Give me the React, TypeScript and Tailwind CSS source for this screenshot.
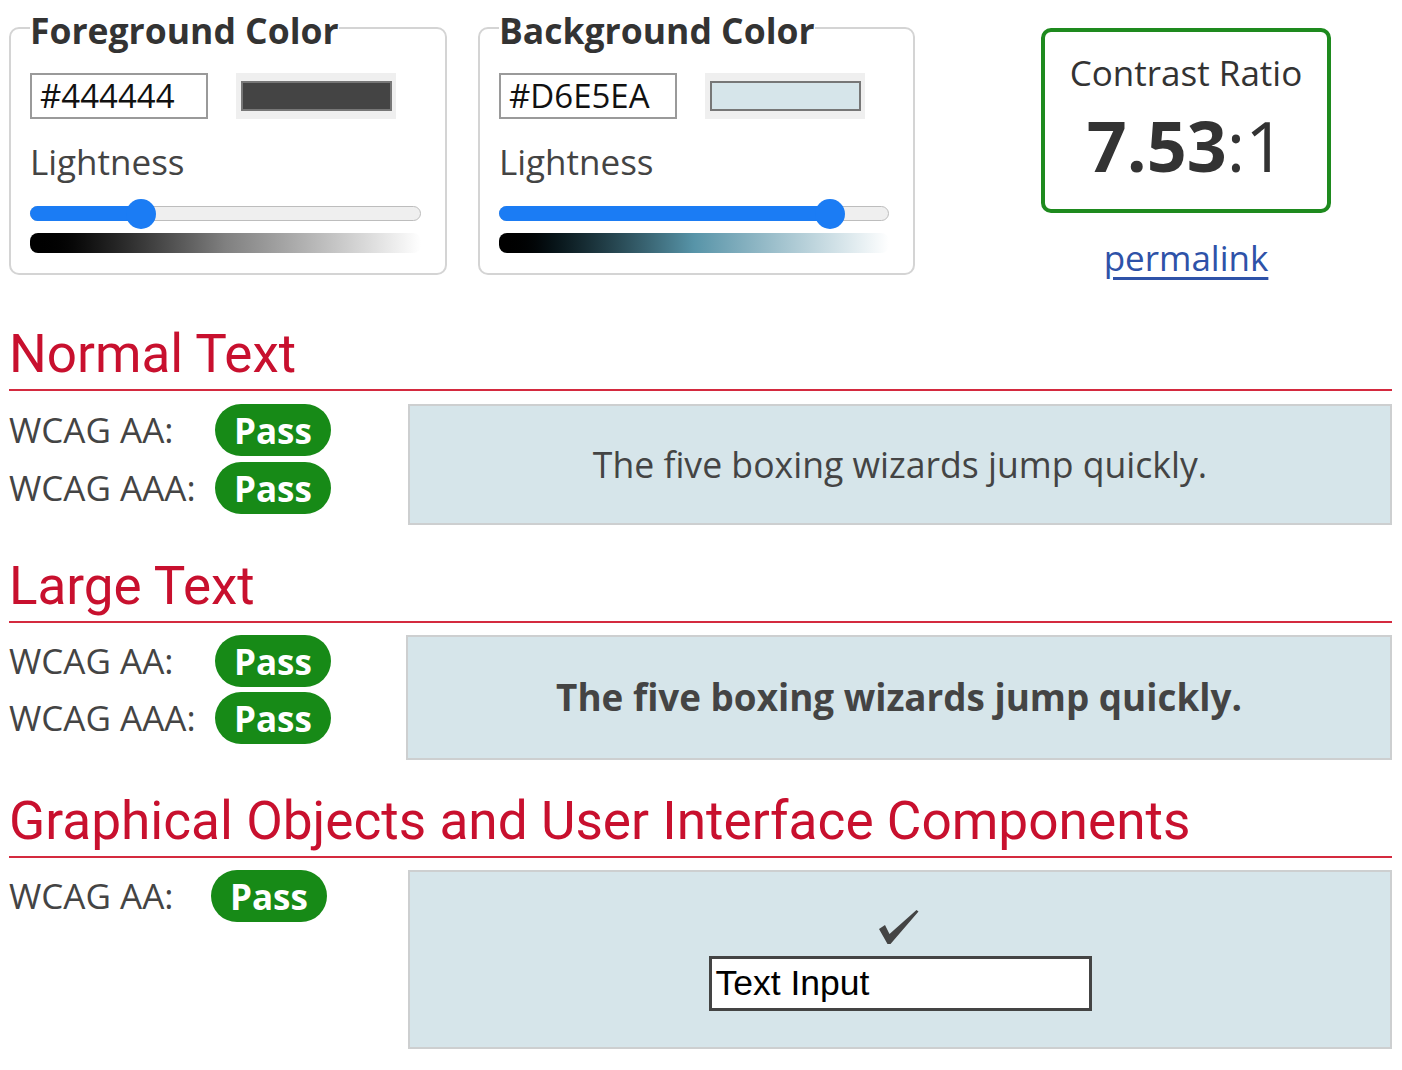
import React from "react";

const sans = "font-['Open_Sans',sans-serif]";

interface ColorProps {
  title: string;
  hex: string;
  lightness: number;
  gradient: string;
  className?: string;
}

function Slider({ lightness }: { lightness: number }) {
  // thumb centre travels between 15px and (width - 15px), like a native range
  const pos = `calc(15px + (100% - 30px) * ${lightness / 100})`;
  return (
    <div className="relative mt-[11px] h-[30px]">
      <div className="absolute inset-x-0 top-[7px] h-[15px] rounded-full border border-[#bdbdbd] bg-[#efefef]" />
      <div
        className="absolute left-0 top-[7px] h-[15px] rounded-full bg-[#1b7cf4]"
        style={{ width: pos }}
      />
      <div
        className="absolute top-0 h-[30px] w-[30px] -translate-x-1/2 rounded-full bg-[#1b7cf4]"
        style={{ left: pos }}
      />
    </div>
  );
}

function ColorPicker({ title, hex, lightness, gradient, className }: ColorProps) {
  return (
    <fieldset
      className={`rounded-[10px] border-2 border-[#d4d4d4] pt-[19px] pr-[24px] pb-[20px] pl-[19px] ${className ?? ""}`}
    >
      <legend className="translate-y-[2px] text-[35.5px] font-bold leading-[52px] text-[#333]">{title}</legend>
      <div className="flex items-center gap-[28px]">
        <input
          type="text"
          value={hex}
          readOnly
          className={`h-[46px] w-[178px] border-2 border-[#9a9a9a] bg-white px-[8px] text-[33px] text-[#111] outline-none ${sans}`}
        />
        <div className="flex h-[46px] w-[160px] items-center justify-center bg-[#efefef]">
          <div className="h-[30px] w-[151px] border-2 border-[#777]" style={{ backgroundColor: hex }} />
        </div>
      </div>
      <div className="mt-[17px] text-[35px] leading-[52px] text-[#444]">Lightness</div>
      <Slider lightness={lightness} />
      <div className={`mt-[4px] h-[20px] rounded-[8px] ${gradient}`} />
    </fieldset>
  );
}

function Pass() {
  return (
    <span className="inline-flex h-[52px] items-center rounded-full bg-[#178a17] px-[19px] text-[35px] font-bold leading-none text-white">
      Pass
    </span>
  );
}

function Result({ label, labelWidth = "w-[206px]" }: { label: string; labelWidth?: string }) {
  return (
    <div className="flex h-[52px] items-center">
      <span className={`${labelWidth} text-[35px] leading-[52px] text-[#444]`}>{label}</span>
      <Pass />
    </div>
  );
}

function Heading({ children, className }: { children: React.ReactNode; className?: string }) {
  return (
    <h2
      className={`border-b-2 border-[#d42a3f] pb-[5px] font-['Roboto',sans-serif] leading-[60px] font-normal text-[#c8102e] ${className ?? ""}`}
    >
      {children}
    </h2>
  );
}

export default function App() {
  return (
    <div className={`min-h-[1070px] w-[1402px] bg-white pl-[9px] pr-[10px] pt-[2px] text-[#444] ${sans}`}>
      <div className="flex h-[280px] items-start">
        <ColorPicker
          title="Foreground Color"
          hex="#444444"
          lightness={26.7}
          gradient="bg-linear-to-r from-black via-[#808080] to-white"
          className="w-[438px]"
        />
        <ColorPicker
          title="Background Color"
          hex="#D6E5EA"
          lightness={87.8}
          gradient="bg-linear-to-r from-black via-[#5794a8] to-white"
          className="ml-[31px] w-[437px]"
        />
        <div className="ml-[126px] flex w-[290px] flex-col items-center">
          <div className="mt-[26px] flex h-[185px] w-full flex-col items-center rounded-[10px] border-4 border-[#1e8a1e] pt-[15px]">
            <div className="text-[35px] leading-[52px] text-[#333]">Contrast Ratio</div>
            <div className="mt-[6px] text-[70px] leading-[80px] text-[#333]">
              <span className="font-bold">7.53</span>:1
            </div>
          </div>
          <a href="#" className="mt-[19px] text-[35px] leading-[52px] text-[#2e52a8] underline underline-offset-[6px]">
            permalink
          </a>
        </div>
      </div>

      <Heading className="mt-[42px] text-[53px]">Normal Text</Heading>
      <div className="mt-[13px] flex items-start">
        <div className="flex w-[399px] flex-col gap-[6px]">
          <Result label="WCAG AA:" />
          <Result label="WCAG AAA:" />
        </div>
        <div className="flex h-[121px] flex-1 items-center justify-center border-2 border-[#cdcfd0] bg-[#D6E5EA] text-[35.6px] text-[#444]">
          The five boxing wizards jump quickly.
        </div>
      </div>

      <Heading className="mt-[31px] text-[53px]">Large Text</Heading>
      <div className="mt-[12px] flex items-start">
        <div className="flex w-[397px] flex-col gap-[5px]">
          <Result label="WCAG AA:" />
          <Result label="WCAG AAA:" />
        </div>
        <div className="flex h-[125px] flex-1 items-center justify-center border-2 border-[#cdcfd0] bg-[#D6E5EA] text-[36.8px] font-bold text-[#444]">
          The five boxing wizards jump quickly.
        </div>
      </div>

      <Heading className="mt-[31px] text-[53.2px]">Graphical Objects and User Interface Components</Heading>
      <div className="mt-[12px] flex items-start">
        <div className="flex w-[399px] flex-col">
          <Result label="WCAG AA:" labelWidth="w-[202px]" />
        </div>
        <div className="flex h-[179px] flex-1 flex-col items-center justify-center border-2 border-[#cdcfd0] bg-[#D6E5EA]">
          <svg width="42" height="38" viewBox="0 0 42 38" className="ml-[-2px]">
            <path d="M1 21 L7 17 L11.5 26 L38.5 2 L40.5 3.5 L12.5 36 L9.5 36 Z" fill="#444" />
          </svg>
          <div className="mt-[10px] flex h-[55px] w-[383px] items-center border-[3px] border-[#444] bg-white px-[4px] font-['Liberation_Sans',Arial,sans-serif] text-[35.5px] text-black">
            Text Input
          </div>
        </div>
      </div>
    </div>
  );
}
